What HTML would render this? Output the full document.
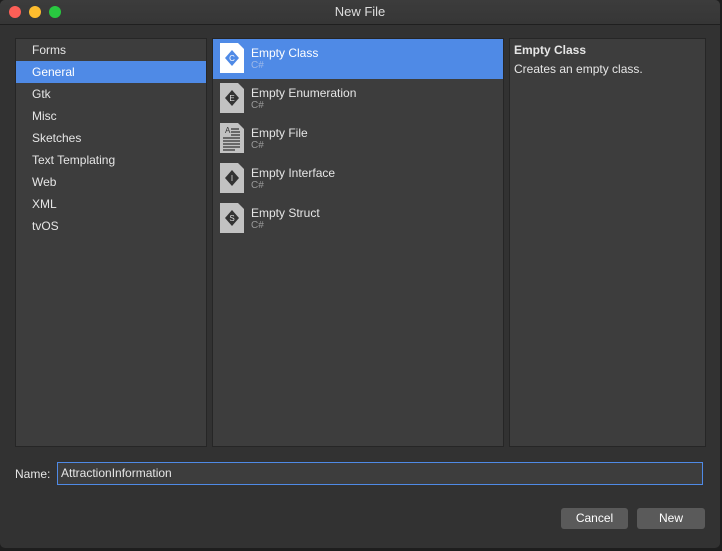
<!DOCTYPE html><html><head><style>
body{margin:0;width:722px;height:551px;background:#1e1e1e;font-family:"Liberation Sans",sans-serif;font-size:12px;color:#e6e6e6;overflow:hidden;position:relative}
.win{position:absolute;left:0;top:0;width:720px;height:548px;background:#323232;border-radius:5px;overflow:hidden}
.tb{height:24px;background:linear-gradient(#3c3c3c,#363636);border-bottom:1px solid #1f1f1f;text-align:center;line-height:24px;font-size:13px;color:#ddd}
.dot{position:absolute;top:6px;width:12px;height:12px;border-radius:50%}
.p{position:absolute;top:38px;height:407px;background:#3d3d3d;border:1px solid #262626}
.li{height:22px;line-height:22px;padding-left:16px;color:#e6e6e6}
.sel{background:#4f8ae6;color:#fff}
.mi{height:40px;position:relative}
.mi .t{position:absolute;left:38px;top:7px;font-size:12px}
.mi .s{position:absolute;left:38px;top:21px;font-size:10px;color:#9a9a9a}
.mi svg{position:absolute;left:7px;top:4px}
.btn{position:absolute;top:508px;height:21px;background:#5a5a5a;border-radius:3px;text-align:center;line-height:21px;color:#fff}
</style></head><body><div class="win">
<div class="tb">New File</div>
<div class="dot" style="left:9px;background:#fc5f57"></div>
<div class="dot" style="left:29px;background:#fdbc2e"></div>
<div class="dot" style="left:49px;background:#29c840"></div>
<div class="p" style="left:15px;width:190px"><div class="li">Forms</div><div class="li sel">General</div><div class="li">Gtk</div><div class="li">Misc</div><div class="li">Sketches</div><div class="li">Text Templating</div><div class="li">Web</div><div class="li">XML</div><div class="li">tvOS</div></div>
<div class="p" style="left:212px;width:290px">
<div class="mi sel"><svg width="24" height="30"><path d="M0 0H18L24 6V30H0Z" fill="#fff"/><path d="M12 7L19 15L12 23L5 15Z" fill="#4f8ae6"/><text x="12" y="18" font-size="8" fill="#fff" text-anchor="middle" font-family="Liberation Sans">C</text></svg><div class="t">Empty Class</div><div class="s" style="color:#9db8e8">C#</div></div>
<div class="mi"><svg width="24" height="30"><path d="M0 0H18L24 6V30H0Z" fill="#c2c2c2"/><path d="M12 7L19 15L12 23L5 15Z" fill="#333"/><text x="12" y="18" font-size="8" fill="#ddd" text-anchor="middle" font-family="Liberation Sans">E</text></svg><div class="t">Empty Enumeration</div><div class="s">C#</div></div>
<div class="mi"><svg width="24" height="30"><path d="M0 0H18L24 6V30H0Z" fill="#c2c2c2"/><text x="5" y="10" font-size="8" fill="#333" font-family="Liberation Sans">A</text><path d="M11 6h8M11 9h9M11 12h9M3 15h17M3 18h17M3 21h17M3 24h17M3 27h12" stroke="#333" stroke-width="1.2"/></svg><div class="t">Empty File</div><div class="s">C#</div></div>
<div class="mi"><svg width="24" height="30"><path d="M0 0H18L24 6V30H0Z" fill="#c2c2c2"/><path d="M12 7L19 15L12 23L5 15Z" fill="#333"/><text x="12" y="18" font-size="8" fill="#ddd" text-anchor="middle" font-family="Liberation Sans">I</text></svg><div class="t">Empty Interface</div><div class="s">C#</div></div>
<div class="mi"><svg width="24" height="30"><path d="M0 0H18L24 6V30H0Z" fill="#c2c2c2"/><path d="M12 7L19 15L12 23L5 15Z" fill="#333"/><text x="12" y="18" font-size="8" fill="#ddd" text-anchor="middle" font-family="Liberation Sans">S</text></svg><div class="t">Empty Struct</div><div class="s">C#</div></div>
</div>
<div class="p" style="left:509px;width:195px"><div style="padding:4px 4px 0;font-weight:bold">Empty Class</div><div style="padding:5px 4px">Creates an empty class.</div></div>
<div style="position:absolute;left:15px;top:467px">Name:</div>
<div style="position:absolute;left:57px;top:462px;width:641px;height:21px;background:#3d3d3d;border:1px solid #4f8ae6;line-height:21px;padding-left:3px;box-sizing:content-box">AttractionInformation</div>
<div class="btn" style="left:561px;width:67px">Cancel</div>
<div class="btn" style="left:637px;width:68px">New</div>
</div></body></html>
